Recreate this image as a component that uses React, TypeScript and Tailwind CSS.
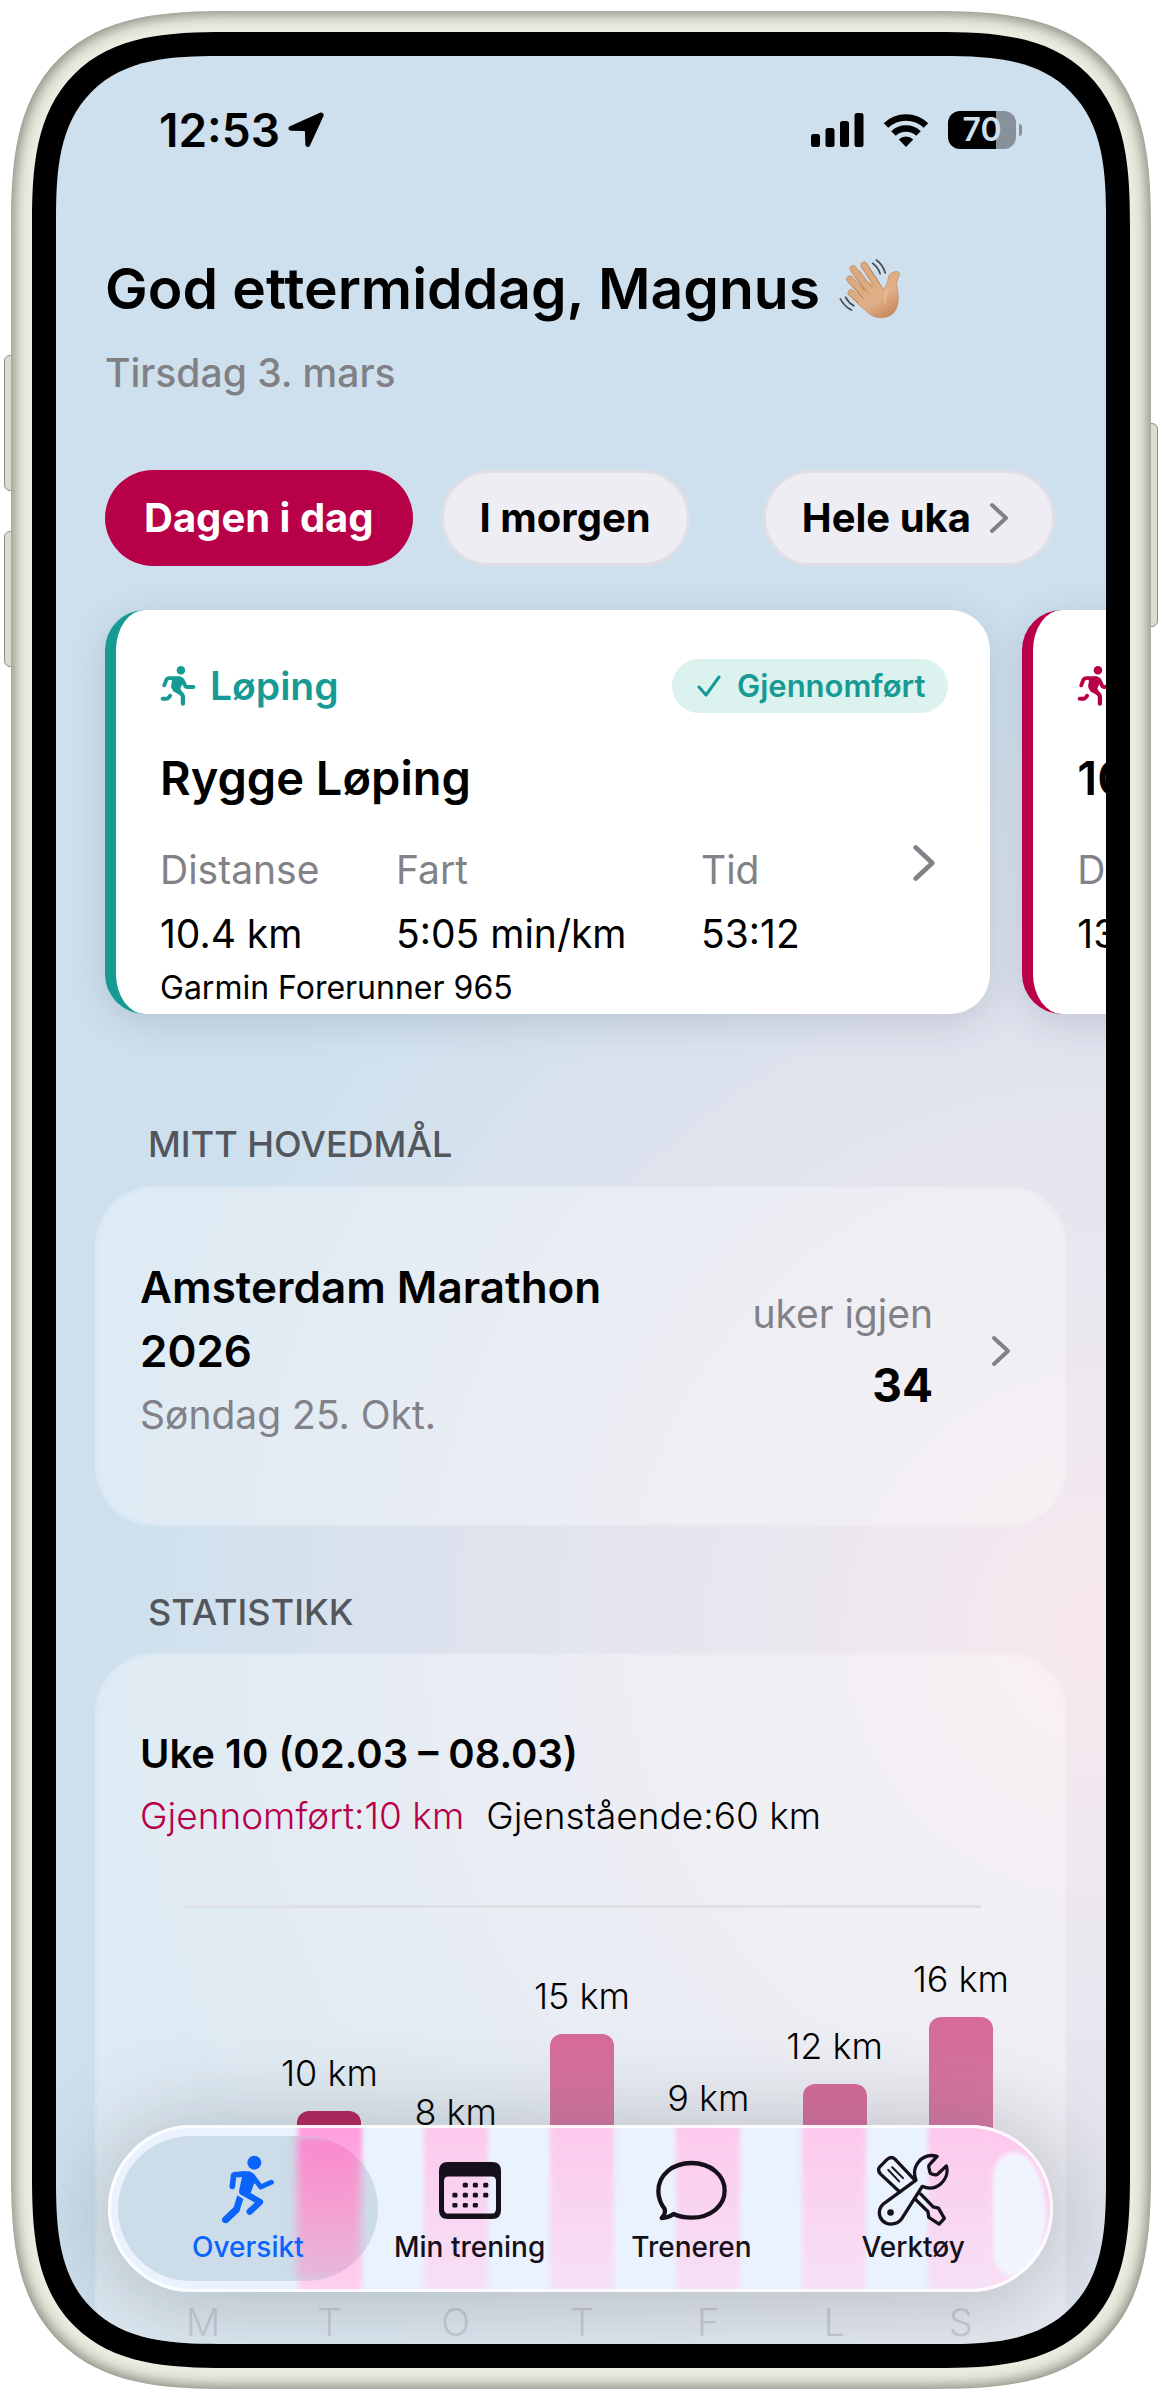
import { useState } from 'react'
import clsx from 'clsx'

type IconProps = { className?: string }

function LocationIcon({ className }: IconProps) {
  return (
    <svg className={className} viewBox="0 0 36 36" fill="currentColor" aria-hidden="true">
      <path d="M32 .8c2.200-.9 4.300 1 3.500 3.300L22 33.500c-1 2.500-4.600 1.900-4.700-.9L17 20.200c0-.8-.4-1.200-1.200-1.200L3.200 18.700C.4 18.600-.7 15.500 1.900 14.200z" />
    </svg>
  )
}

function SignalIcon({ className }: IconProps) {
  return (
    <svg className={className} viewBox="0 0 53 34" fill="currentColor" aria-hidden="true">
      <rect x="0" y="21" width="9" height="13" rx="2.500" />
      <rect x="14.500" y="15" width="9" height="19" rx="2.500" />
      <rect x="29" y="8" width="9" height="26" rx="2.500" />
      <rect x="43.500" y="0" width="9" height="34" rx="2.500" />
    </svg>
  )
}

function WifiIcon({ className }: IconProps) {
  return (
    <svg className={className} viewBox="0 0 46 34" fill="none" aria-hidden="true">
      <path d="M3 12.500a29 29 0 0 1 40 0" stroke="currentColor" strokeWidth="6.500" />
      <path d="M10.500 20.500a18 18 0 0 1 25 0" stroke="currentColor" strokeWidth="6.500" />
      <path d="M23 34l-7.200-7.600a10.500 10.500 0 0 1 14.400 0z" fill="currentColor" />
    </svg>
  )
}

function WaveIcon({ className }: IconProps) {
  return (
    <svg className={className} viewBox="36 50 194 194" fill="none" aria-hidden="true">
      <defs>
        <linearGradient id="skin" x1="60" y1="70" x2="180" y2="240" gradientUnits="userSpaceOnUse">
          <stop offset="0" stopColor="#dca576" />
          <stop offset="0.7" stopColor="#dfb088" />
          <stop offset="1" stopColor="#c8875a" />
        </linearGradient>
      </defs>
      <g stroke="#b9794d" strokeLinecap="round" strokeWidth="21">
        <path d="M82 86l60 82M115 75l48 74M72 117l60 66M76 159l52 46" />
      </g>
      <path
        d="M128 128l42 20c14-6 16-20 19-38 3-14 34-24 34-8l-10 26c6 30 10 62-2 82-14 28-54 30-78 14l-36-32z"
        fill="url(#skin)"
        stroke="#c8875a"
        strokeWidth="2"
      />
      <g stroke="url(#skin)" strokeLinecap="round" strokeWidth="18">
        <path d="M82 86l60 82M115 75l48 74M72 117l60 66M76 159l62 48" />
      </g>
      <g stroke="#b9794d" strokeWidth="2" strokeLinecap="round">
        <path d="M102 92l38 52M90 113l42 50M84 141l32 38M132 85l30 46" />
      </g>
      <path d="M188 148q-14 20-8 40" stroke="#e6bd95" strokeWidth="6" strokeLinecap="round" />
      <g stroke="#4b4b4b" strokeWidth="5" strokeLinecap="round">
        <path d="M152 59q20 14 27 39M141 69q17 13 23 32M59 172q9 17 25 26M43 177q13 24 34 34" />
      </g>
    </svg>
  )
}

function JogIcon({ className }: IconProps) {
  return (
    <svg className={className} viewBox="36 72 110 128" fill="none" stroke="currentColor" strokeLinecap="round" strokeLinejoin="round" aria-hidden="true">
      <circle cx="100" cy="88" r="13" fill="currentColor" stroke="none" />
      <path d="M49 134l6-16q3-6 10-6h30q8 2 12 10l5 12q2 5 8 5h18" strokeWidth="12" />
      <path d="M76 114l30 3-12 26 5 12-20-8q-8-8-3-20z" fill="currentColor" strokeWidth="8" />
      <path d="M82 148l16 9q8 5 8 13v20" strokeWidth="13" />
      <path d="M44 175h12q4 0 6-3l5-6" strokeWidth="12" />
    </svg>
  )
}

function CheckIcon({ className }: IconProps) {
  return (
    <svg className={className} viewBox="0 0 24 24" fill="none" stroke="currentColor" strokeWidth="3" strokeLinecap="round" strokeLinejoin="round" aria-hidden="true">
      <path d="M2 13l7 8L22 3" />
    </svg>
  )
}

function ChevronIcon({ className }: IconProps) {
  return (
    <svg className={className} viewBox="0 0 20 32" fill="none" stroke="#818187" strokeWidth="4" strokeLinecap="round" strokeLinejoin="round" aria-hidden="true">
      <path d="M3 3l14 13L3 29" />
    </svg>
  )
}

function RunnerIcon({ className }: IconProps) {
  return (
    <svg className={className} viewBox="36 45 162 210" fill="none" stroke="currentColor" strokeLinecap="round" strokeLinejoin="round" aria-hidden="true">
      <circle cx="136" cy="68" r="21" fill="currentColor" stroke="none" />
      <path d="M70 139l4-34 34-3" strokeWidth="17" />
      <path d="M74 96l42-2q14 0 20 11l10 20-11 6-9 25-8 12-20-4q-10-6-6-20l8-38-32 2z" fill="currentColor" stroke="none" />
      <path d="M132 110l23 31 32-14" strokeWidth="15" />
      <path d="M104 148l-4 8 53 30-31 29" strokeWidth="19" />
      <path d="M85 166l18 11-12 38-35 33q-10 6-17-5-2-7 4-12l31-29z" fill="currentColor" stroke="none" />
    </svg>
  )
}

function CalendarIcon({ className }: IconProps) {
  return (
    <svg className={className} viewBox="0 0 185 170" fill="currentColor" aria-hidden="true">
      <path
        fillRule="evenodd"
        d="M26 0h133q26 0 26 26v118q0 26-26 26H26Q0 170 0 144V26Q0 0 26 0zM28 43q-13 0-13 13v84q0 14 14 14h127q14 0 14-14V56q0-13-13-13z"
      />
      {[
        [78, 69], [108, 69], [139, 69],
        [47, 99], [78, 99], [108, 99], [139, 99],
        [47, 129], [78, 129], [108, 129],
      ].map(([x, y]) => (
        <rect key={`${x}-${y}`} x={x - 7} y={y - 7} width="15" height="14" rx="4" />
      ))}
    </svg>
  )
}

function BubbleIcon({ className }: IconProps) {
  return (
    <svg className={className} viewBox="48 50 220 184" fill="none" stroke="currentColor" strokeWidth="13" strokeLinejoin="round" aria-hidden="true">
      <path d="M104 213q24 11 54 11c58 0 100-36 100-82s-42-83-100-83S58 96 58 144c0 26 9 40 19 54 3 10-2 20-9 27q19 0 36-12z" />
    </svg>
  )
}

function ToolsIcon({ className }: IconProps) {
  return (
    <svg className={className} viewBox="711 40 224 222" fill="none" stroke="currentColor" strokeWidth="10" strokeLinejoin="round" strokeLinecap="round" aria-hidden="true">
      <path d="M783 157l-58-54q-11-12-2-23l21-21q13-12 25-1l56 59" />
      <path d="M748 90l33 35M760 82l33 33" strokeWidth="6" />
      <path d="M829 178l39 38 3 18 31 20 16-17-18-31-16-4-38-39" />
      <path d="M832 121c-16-41 18-84 64-72l-23 25q-3 3-2 8l3 14q1 6 7 7l10 2q5 1 8-3l25-24c12 42-32 81-73 62l-62 98c-10 14-20 16-33 16-20 0-35-15-35-34 0-14 9-26 21-33z" />
      <circle cx="755" cy="219" r="10" fill="currentColor" stroke="none" />
    </svg>
  )
}

function StatusBar() {
  return (
    <div className="flex h-[52px] items-center justify-between pr-[84px] pl-[103px]">
      <div className="flex items-center gap-2">
        <span className="text-[46px] leading-[52px] font-semibold">12:53</span>
        <LocationIcon className="size-9" />
      </div>
      <div className="flex items-center gap-[19px]">
        <SignalIcon className="h-[34px] w-[53px]" />
        <WifiIcon className="h-[34px] w-[46px]" />
        <div className="flex items-center gap-[3px]">
          <div className="flex h-[38px] w-[68px] items-center justify-center rounded-xl bg-[linear-gradient(90deg,#000_71%,#86919b_71%)] text-[32px] leading-8 font-semibold text-[#cee0ee]">
            70
          </div>
          <div className="h-3 w-[3px] rounded-r-full bg-[#86919b]" />
        </div>
      </div>
    </div>
  )
}

type Workout = {
  title: string
  distance: string
  pace: string
  time: string
  device?: string
  done: boolean
}

const workouts: Workout[] = [
  { title: 'Rygge Løping', distance: '10.4 km', pace: '5:05 min/km', time: '53:12', device: 'Garmin Forerunner 965', done: true },
  { title: '10 km rolig', distance: '13 km', pace: '5:30 min/km', time: '1:11:30', done: false },
]

function WorkoutCard({ workout }: { workout: Workout }) {
  const stats = [
    ['Distanse', workout.distance, 'w-[236px]'],
    ['Fart', workout.pace, 'w-[305px]'],
    ['Tid', workout.time, 'w-[110px]'],
  ]
  return (
    <article
      className={clsx(
        'h-[404px] w-[93%] shrink-0 rounded-[40px] border-l-[11px] bg-white pt-12 pr-[42px] pl-11 shadow-[0_8px_36px_rgba(60,70,90,0.18)]',
        workout.done ? 'border-[#169a94]' : 'border-[#b80049]'
      )}
    >
      <div className="flex h-14 items-center justify-between">
        <div className={clsx('flex items-center gap-[14px] text-[39px] leading-[48px] font-semibold', workout.done ? 'text-[#169a94]' : 'text-[#b80049]')}>
          <JogIcon className="h-[42px] w-9" />
          Løping
        </div>
        {workout.done && (
          <span className="flex h-[54px] items-center gap-4 rounded-full bg-[#dbf2ef] pr-[23px] pl-[25px] text-[31px] font-semibold text-[#169a94]">
            <CheckIcon className="size-6" />
            Gjennomført
          </span>
        )}
      </div>
      <h2 className="mt-8 text-[47px] leading-[64px] font-semibold">{workout.title}</h2>
      <div className="mt-7 flex items-start">
        {stats.map(([label, value, width]) => (
          <dl key={label} className={clsx('shrink-0 text-[39px] leading-[64px]', width)}>
            <dt className="text-[#818187]">{label}</dt>
            <dd>{value}</dd>
          </dl>
        ))}
        <button aria-label="Vis økt" className="mt-[6px] ml-auto pr-3">
          <ChevronIcon className="h-[38px] w-6" />
        </button>
      </div>
      {workout.device && <p className="text-[32px] leading-11">{workout.device}</p>}
    </article>
  )
}

const days = [
  { day: 'M', km: 0, height: 0 },
  { day: 'T', km: 10, height: 178, done: true },
  { day: 'O', km: 8, height: 139 },
  { day: 'T', km: 15, height: 255 },
  { day: 'F', km: 9, height: 153 },
  { day: 'L', km: 12, height: 205 },
  { day: 'S', km: 16, height: 272 },
]

function WeekChart() {
  return (
    <div className="font-light">
      <div className="flex h-[381px] items-end">
        {days.map((d, i) => (
          <div key={i} className="flex flex-1 flex-col items-center">
            {d.km > 0 && (
              <>
                <span className="mb-[14px] text-[36px] leading-[48px] whitespace-nowrap">{d.km} km</span>
                <div
                  className={clsx('w-16 rounded-t-xl', d.done ? 'bg-[#b9245f]' : 'bg-linear-to-b from-[#d66a9a] to-[#d690b8]')}
                  style={{ height: d.height }}
                />
              </>
            )}
          </div>
        ))}
      </div>
      <div className="mt-3 flex text-[38px] leading-[43px] text-[#c9ced6]">
        {days.map((d, i) => (
          <span key={i} className="flex-1 text-center">
            {d.day}
          </span>
        ))}
      </div>
    </div>
  )
}

const tabs = [
  { name: 'Oversikt', icon: <RunnerIcon className="h-[70px] w-[54px]" /> },
  { name: 'Min trening', icon: <CalendarIcon className="h-[57px] w-[62px]" /> },
  { name: 'Treneren', icon: <BubbleIcon className="h-[61px] w-[73px]" /> },
  { name: 'Verktøy', icon: <ToolsIcon className="size-[74px]" /> },
]

function TabBar() {
  const [active, setActive] = useState('Oversikt')

  return (
    <nav className="absolute right-[53px] bottom-[52px] left-[52px] h-[167px] rounded-full bg-[#eaf2fe] shadow-[0_8px_90px_10px_rgba(60,65,70,0.28)]">
      {/* chart bars refracted through the glass */}
      <div className="absolute inset-0 overflow-hidden rounded-full" aria-hidden="true">
        <div className="absolute top-0 bottom-0 left-[88%] w-[20%] bg-linear-to-b from-[#fdc8ec] to-[#f9dff4] blur-[2px]" />
        <div className="absolute -inset-y-1 right-[30px] left-[33px] flex">
          {days.map((d, i) => (
            <div key={i} className="flex flex-1 justify-center">
              {d.km > 0 && (
                <div
                  className={clsx(
                    'h-full w-16 blur-[2px]',
                    d.done ? 'bg-linear-to-b from-[#ff9bda] to-[#fdd3f0]' : 'bg-linear-to-b from-[#fdc8ec] to-[#f5e2f6]'
                  )}
                />
              )}
            </div>
          ))}
        </div>
        <div className="absolute top-[27px] right-[7px] h-[125px] w-[53px] rounded-[40%_60%_60%_40%/20%_50%_50%_20%] bg-[#f0f4fe] blur-[2px]" />
      </div>
      <div className="absolute inset-0 rounded-full border-[3px] border-white/85" />
      <div className="relative flex h-full px-[29px]">
        {tabs.map((tab) => {
          const selected = tab.name === active
          return (
            <button
              key={tab.name}
              onClick={() => setActive(tab.name)}
              className={clsx(
                'relative flex flex-1 flex-col items-center pt-[27px] text-[28px] leading-8 font-medium whitespace-nowrap',
                selected ? 'text-[#0a64fb]' : 'text-[#15101a]'
              )}
            >
              {selected && (
                <span className="absolute -inset-x-[19px] inset-y-[11px] overflow-hidden rounded-full bg-[#cddce9]">
                  <span className="absolute inset-y-0 left-[69%] w-16 bg-linear-to-b from-[#f988cd] via-[#f59fd2] to-[#e3badc] blur-xs" />
                </span>
              )}
              <span className="relative flex h-[76px] items-center">{tab.icon}</span>
              <span className="relative mt-[3px]">{tab.name}</span>
            </button>
          )
        })}
      </div>
    </nav>
  )
}

function SectionTitle({ children }: { children: string }) {
  return <h2 className="pl-[53px] text-[36px] leading-[48px] font-medium text-[#53575c]">{children}</h2>
}

export default function App() {
  return (
    <div className="bg-white px-[11px] py-[11px] font-['Inter','Liberation_Sans',sans-serif] text-black">
      <div className="relative">
        {/* hardware buttons */}
        <div className="absolute top-[344px] -left-[7px] h-[136px] w-3 rounded-l-md border border-[#8f8e84] bg-[#dddcd1]" />
        <div className="absolute top-[520px] -left-[7px] h-[136px] w-3 rounded-l-md border border-[#8f8e84] bg-[#dddcd1]" />
        <div className="absolute top-[412px] -right-[7px] h-[204px] w-3 rounded-r-md border border-[#8f8e84] bg-[#dddcd1]" />

        <div className="relative rounded-[220px] bg-[#ecebe0] p-[21px] shadow-[inset_0_0_14px_3px_#85857b] [corner-shape:superellipse(1.5)]">
          <div className="rounded-[194px] bg-black p-6 [corner-shape:superellipse(1.5)]">
            <div className="relative overflow-hidden rounded-[164px] bg-[radial-gradient(95%_44%_at_100%_69%,#f8e9ee_0%,#eae7ef_32%,#e0e3ee_60%,#d6e2ed_80%,#cee0ee_100%)] pt-12 [corner-shape:superellipse(1.5)]">
              <StatusBar />

              <header className="mt-[97px] px-[49px]">
                <h1 className="flex items-center gap-[18px] text-[57px] leading-[72px] font-semibold whitespace-nowrap">
                  God ettermiddag, Magnus
                  <WaveIcon className="size-16" />
                </h1>
                <p className="mt-6 text-[39px] leading-[48px] font-medium text-[#808085]">Tirsdag 3. mars</p>
              </header>

              <div className="mt-[73px] flex h-24 gap-7 pr-[51px] pl-[49px] text-[40px] font-bold">
                <button className="rounded-full bg-[#b80049] px-[39px] text-white">Dagen i dag</button>
                <button className="rounded-full border-[3px] border-[#e0dfe6] bg-[#eeedf4] px-9">I morgen</button>
                <button className="ml-auto flex items-center gap-[18px] rounded-full border-[3px] border-[#e0dfe6] bg-[#eeedf4] px-9 pr-[43px]">
                  Hele uka
                  <ChevronIcon className="h-8 w-5" />
                </button>
              </div>

              <div className="mt-11 flex gap-8 px-[49px]">
                {workouts.map((w) => (
                  <WorkoutCard key={w.title} workout={w} />
                ))}
              </div>

              <section className="mt-[106px] px-[39px]">
                <SectionTitle>MITT HOVEDMÅL</SectionTitle>
                <a
                  href="#hovedmal"
                  className="mt-[18px] flex items-center rounded-[60px] border-[3px] border-white/25 bg-white/35 bg-clip-padding pt-[66px] pr-[53px] pb-[76px] pl-[42px]"
                >
                  <div className="w-[500px]">
                    <h3 className="text-[44px] leading-[64px] font-semibold">Amsterdam Marathon 2026</h3>
                    <p className="text-[39px] leading-[64px] text-[#818187]">Søndag 25. Okt.</p>
                  </div>
                  <div className="ml-auto pb-1 text-right">
                    <p className="text-[39px] leading-[72px] text-[#818187]">uker igjen</p>
                    <p className="text-[46px] leading-[70px] font-bold">34</p>
                  </div>
                  <ChevronIcon className="ml-[58px] h-8 w-5" />
                </a>
              </section>

              <section className="mt-[62px] px-[39px]">
                <SectionTitle>STATISTIKK</SectionTitle>
                <div className="mt-[17px] rounded-t-[60px] border-[3px] border-b-0 border-white/25 bg-white/35 bg-clip-padding pt-[66px] pr-10 pl-[42px]">
                  <h3 className="text-[40px] leading-[64px] font-semibold">Uke 10 (02.03 – 08.03)</h3>
                  <p className="flex gap-[22px] text-[37px] leading-[60px] font-light whitespace-nowrap">
                    <span className="text-[#b80049]">Gjennomført:10 km</span>
                    <span>Gjenstående:60 km</span>
                  </p>
                  <hr className="mx-[43px] mt-[59px] border-t-[3px] border-[#dfdfe6]" />
                  <WeekChart />
                </div>
              </section>

              <TabBar />
            </div>
          </div>
        </div>
      </div>
    </div>
  )
}
